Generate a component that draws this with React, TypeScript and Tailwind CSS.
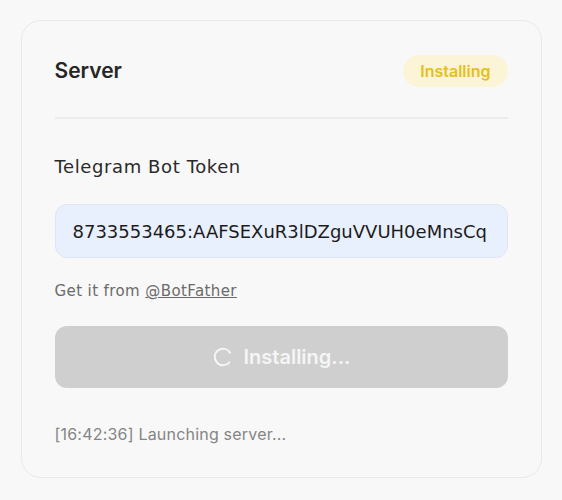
import React from "react";

export default function App() {
  return (
    <div className="min-h-[500px] w-full bg-[#f8f8f8] pt-[20px] [font-family:Inter,'Liberation_Sans',sans-serif]">
      <div className="mx-auto w-[521px] rounded-[20px] border border-[#e9e9e9] bg-[#f8f8f8] px-[33px] pt-[34px] pb-[31px]">
        <div className="flex h-[64px] items-start justify-between border-b-2 border-[#ececec]">
          <div className="text-[21px] font-semibold leading-[32px] text-[#262626]">Server</div>
          <div className="rounded-full bg-[#fcf4d6] px-[17px] py-[6px] text-[16px] font-semibold leading-[20px] text-[#e5bf1c]">
            Installing
          </div>
        </div>
        <div className="mt-[34px] text-[18px] leading-[28px] tracking-[0.6px] text-[#2a2a2a] [font-family:'DejaVu_Sans',sans-serif]">
          Telegram Bot Token
        </div>
        <div className="mt-[23px] flex h-[54px] items-center rounded-[12px] border border-[#dfe6f3] bg-[#e8f0fe] px-[17px] text-[18px] text-[#1c1c1c] [font-family:'DejaVu_Sans',sans-serif]">
          8733553465:AAFSEXuR3lDZguVVUH0eMnsCq
        </div>
        <div className="mt-[23px] text-[15px] leading-[20px] tracking-[0.4px] text-[#6b6b6b] [font-family:'DejaVu_Sans',sans-serif]">
          Get it from <span className="underline">@BotFather</span>
        </div>
        <div className="mt-[25px] flex h-[62px] items-center justify-center gap-[10px] rounded-[12px] bg-[#cfcfcf]">
          <svg width="22" height="22" viewBox="0 0 24 24" fill="none" stroke="#f5f5f5" strokeWidth="2.2" strokeLinecap="round" className="rotate-[40deg]">
            <path d="M21 12a9 9 0 1 1-6.219-8.56" />
          </svg>
          <span className="text-[20px] font-semibold text-[#f5f5f5]">Installing...</span>
        </div>
        <div className="mt-[34px] text-[16px] leading-[24px] tracking-[0.2px] text-[#858585]">[16:42:36] Launching server...</div>
      </div>
    </div>
  );
}
